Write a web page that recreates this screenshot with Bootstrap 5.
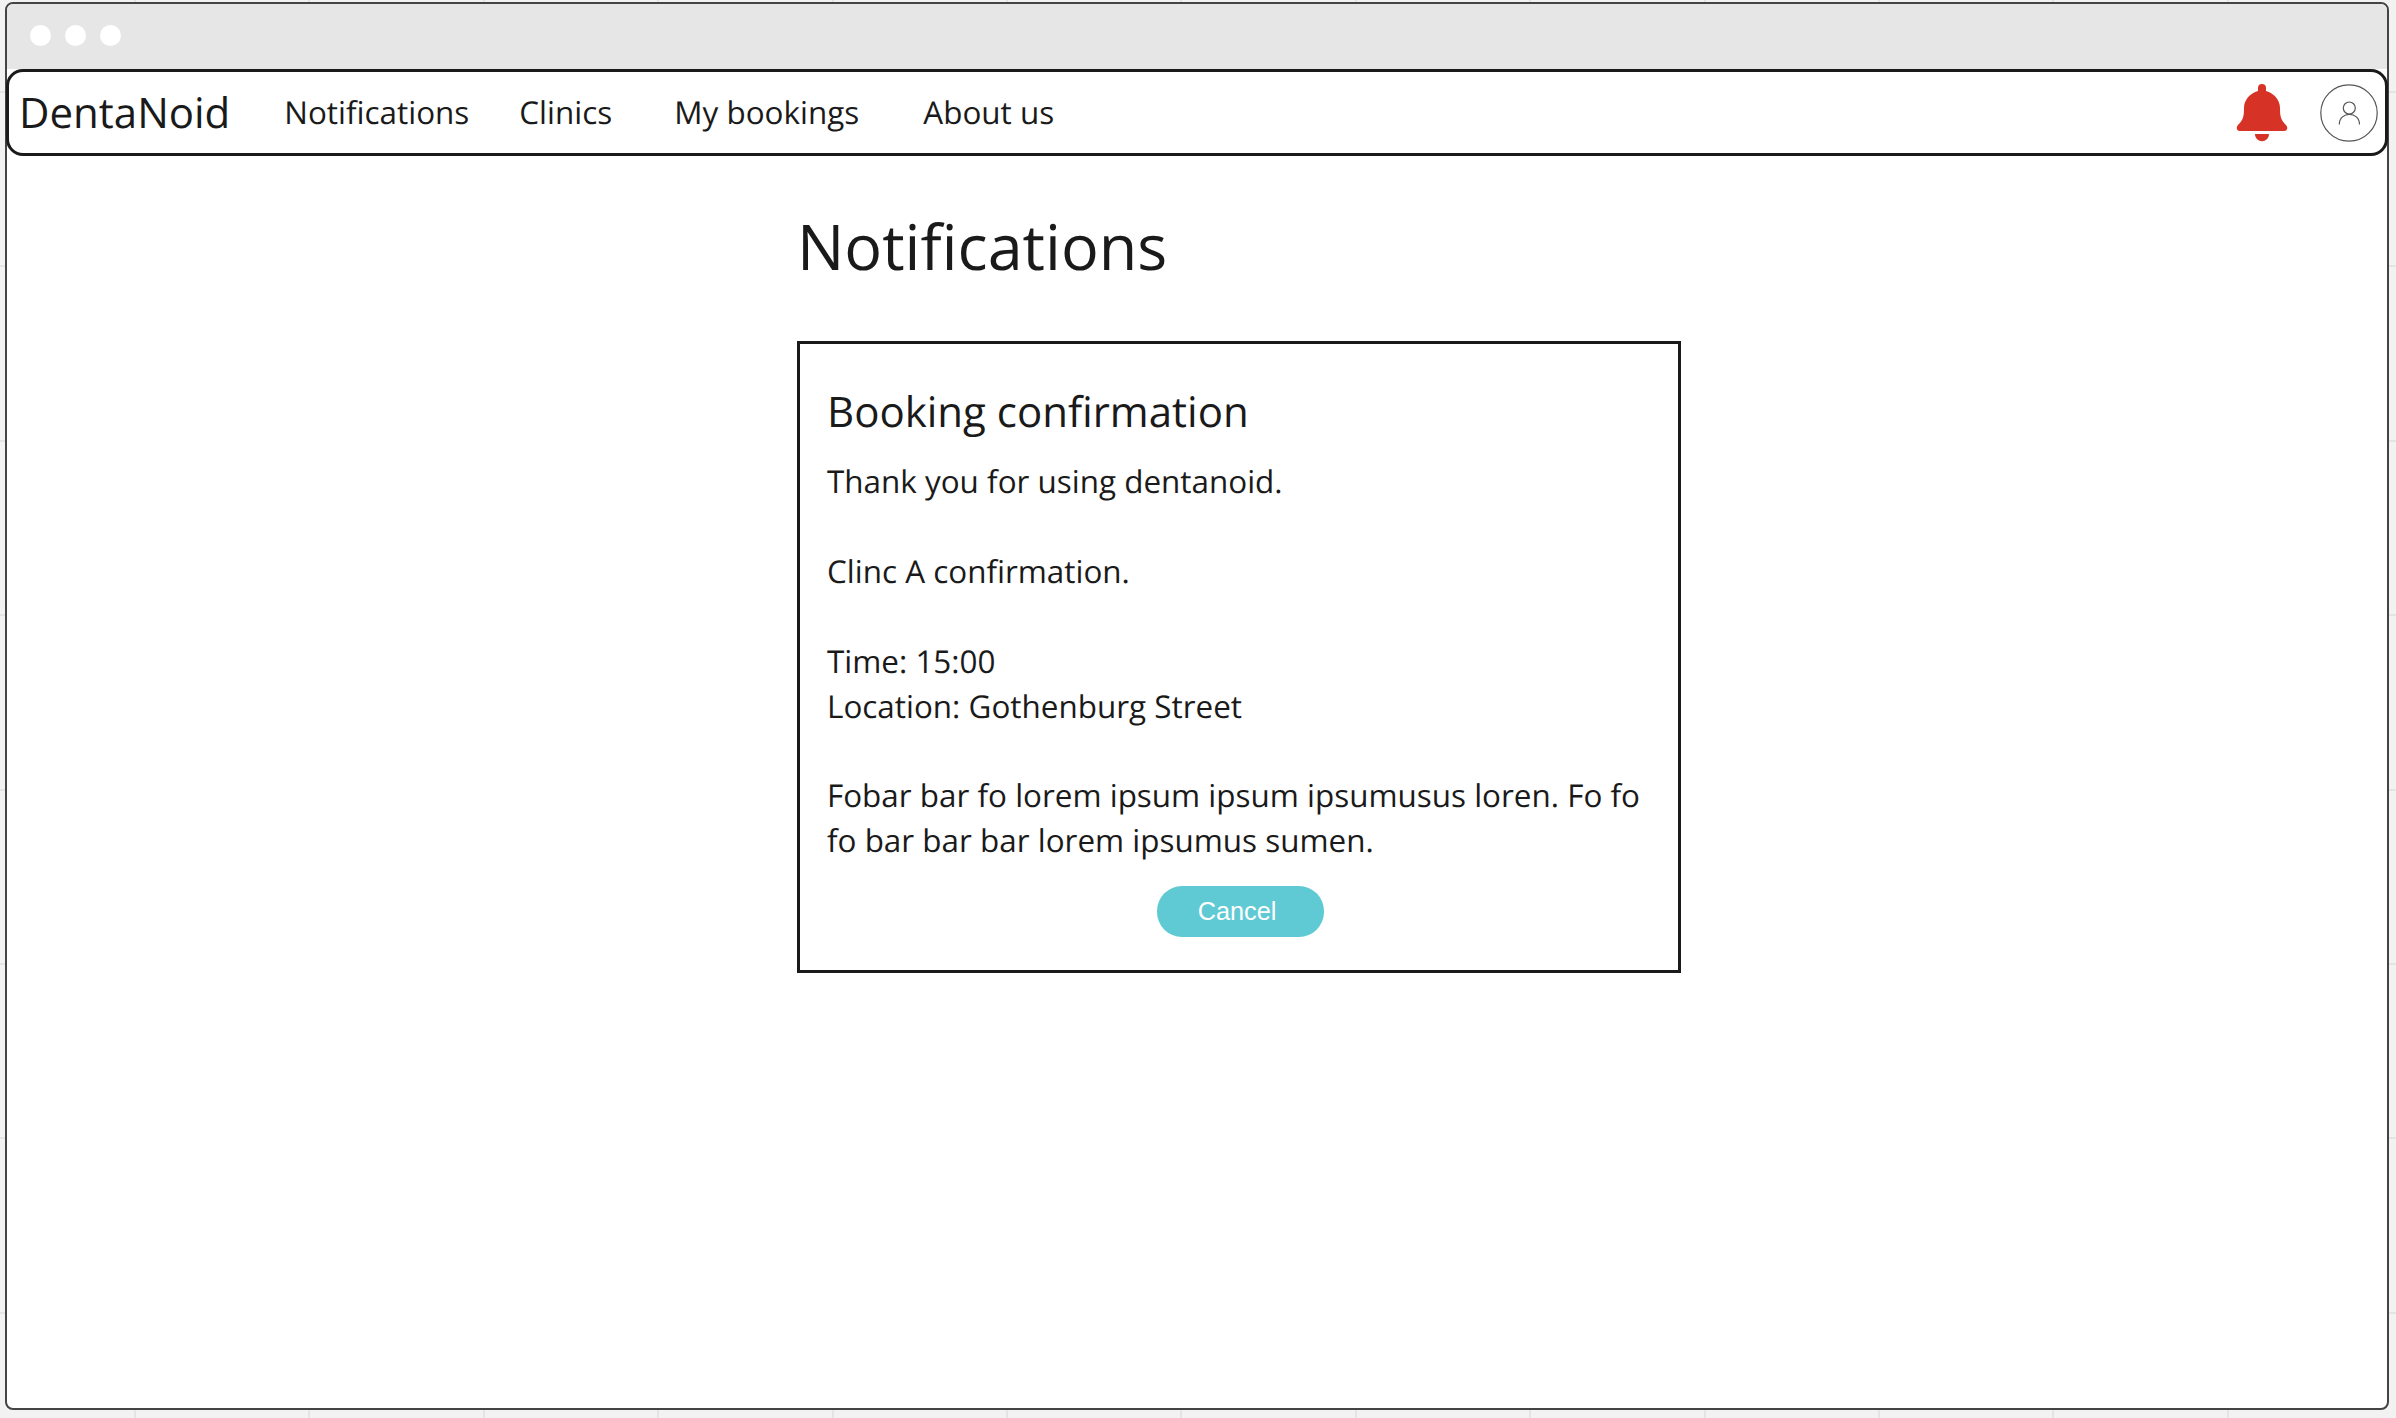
<!DOCTYPE html>
<html lang="en">
<head>
<meta charset="utf-8">
<title>DentaNoid – Notifications</title>
<link href="https://cdn.jsdelivr.net/npm/bootstrap@5.3.0/dist/css/bootstrap.min.css" rel="stylesheet">
<style>
html, body { height: 100%; }
body {
  padding: 2px 7px 8px 5px;
  font-family: "Open Sans", sans-serif;
  font-size: 31.43px; line-height: 44.9px; color: #1a1a1a;
  text-rendering: geometricPrecision;
  background-color: #f2f2f2;
  background-image:
    repeating-linear-gradient(90deg, #e4e4e4 0 2px, transparent 2px 174.4px),
    repeating-linear-gradient(180deg, #e4e4e4 0 2px, transparent 2px 174.4px);
  background-size: 2600px 100%, 100% 2600px;
  background-position: -40.4px 0, 0 -83.4px;
  background-repeat: no-repeat;
}
.browser-frame { border: 2px solid #444; border-radius: 8px; background: #fff; }
.title-bar { height: 65px; background: #e6e6e6; padding: 0 23px 2px; gap: 14px; border-radius: 6px 6px 0 0; }
.dot { width: 21px; height: 21px; border-radius: 50%; background: #fff; }
.site-nav { height: 87px; border: 3px solid #1a1a1a; border-radius: 17px; padding: 0 6px 0 10px; margin: 0 -1px; }
.site-nav .navbar-brand { font-size: 42px; line-height: 50px; color: #1a1a1a; padding: 0; margin: 0 54px 0 0; }
.site-nav .nav-link { padding: 1px 0 0; color: #1a1a1a; }
.page-body { margin-left: 790px; width: 884px; }
.page-body h1 { font-size: 62.9px; line-height: 88px; font-weight: 400; margin: 47px 0 50px; }
.notice { border: 3px solid #1a1a1a; padding: 38px 25px 0 27px; height: 632px; }
.notice h2 { font-size: 42px; line-height: 59px; font-weight: 400; margin: 0 0 19px; }
.notice p { margin: 0 0 44.9px; }
.notice .closing { margin-bottom: 22px; }
.btn-cancel, .btn-cancel:hover { width: 167px; height: 51px; background: #5fcad3; color: #fff; border: 0; border-radius: 25px; padding: 0 6px 1px 0; font: 25.3px/50px "Liberation Sans", sans-serif; }
</style>
</head>
<body>
<div class="browser-frame h-100 d-flex flex-column">
  <div class="title-bar d-flex align-items-center flex-shrink-0">
    <span class="dot"></span><span class="dot"></span><span class="dot"></span>
  </div>
  <nav class="site-nav d-flex align-items-center flex-shrink-0">
    <a class="navbar-brand" href="#">DentaNoid</a>
    <ul class="nav">
      <li class="nav-item" style="width:235px"><a class="nav-link" href="#">Notifications</a></li>
      <li class="nav-item" style="width:155px"><a class="nav-link" href="#">Clinics</a></li>
      <li class="nav-item" style="width:249px"><a class="nav-link" href="#">My bookings</a></li>
      <li class="nav-item"><a class="nav-link" href="#">About us</a></li>
    </ul>
    <svg class="ms-auto" width="52" height="60" viewBox="0 0 52 60" fill="#d63225">
      <path d="M22 8V5a4 4 0 0 1 8 0v3C38 10 44 17 44 25C44 34 45 37 50 42C52.500 45 51 48 48 48H4C1 48-.5 45 2 42C7 37 8 34 8 25C8 17 14 10 22 8Z"/>
      <path d="M19 51H33C33 60.500 19 60.500 19 51Z"/>
    </svg>
    <svg style="margin-left:31px" width="60" height="60" viewBox="0 0 60 60" fill="none" stroke="#555" stroke-width="1.200">
      <circle cx="30" cy="30" r="28.200"/><circle cx="30.300" cy="25" r="6"/><path d="M20.300 41.500C20.300 28 40.500 28 40.500 41.500"/>
    </svg>
  </nav>
  <main class="page-body">
    <h1>Notifications</h1>
    <section class="notice">
      <h2>Booking confirmation</h2>
      <p>Thank you for using dentanoid.</p>
      <p>Clinc A confirmation.</p>
      <p>Time: 15:00<br>Location: Gothenburg Street</p>
      <p class="closing">Fobar bar fo lorem ipsum ipsum ipsumusus loren. Fo fo fo bar bar bar lorem ipsumus sumen.</p>
      <div class="d-flex justify-content-center"><button class="btn btn-cancel" type="button">Cancel</button></div>
    </section>
  </main>
</div>
<script src="https://cdn.jsdelivr.net/npm/bootstrap@5.3.0/dist/js/bootstrap.bundle.min.js"></script>
</body>
</html>
